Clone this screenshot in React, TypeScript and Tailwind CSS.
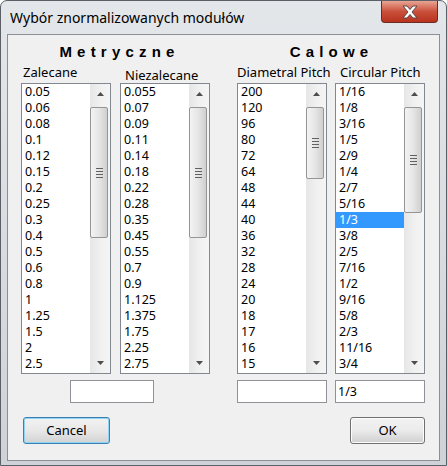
import React from 'react';

const zalecane = ['0.05', '0.06', '0.08', '0.1', '0.12', '0.15', '0.2', '0.25', '0.3', '0.4', '0.5', '0.6', '0.8', '1', '1.25', '1.5', '2', '2.5'];
const niezalecane = ['0.055', '0.07', '0.09', '0.11', '0.14', '0.18', '0.22', '0.28', '0.35', '0.45', '0.55', '0.7', '0.9', '1.125', '1.375', '1.75', '2.25', '2.75'];
const diametral = ['200', '120', '96', '80', '72', '64', '48', '44', '40', '36', '32', '28', '24', '20', '18', '17', '16', '15'];
const circular = ['1/16', '1/8', '3/16', '1/5', '2/9', '1/4', '2/7', '5/16', '1/3', '3/8', '2/5', '7/16', '1/2', '9/16', '5/8', '2/3', '11/16', '3/4'];

const ArrowUp = () => (
  <svg width="7" height="4" viewBox="0 0 7 4">
    <path d="M3.5 0 L7 4 L0 4 Z" fill="#4d4d4d" />
  </svg>
);

const ArrowDown = () => (
  <svg width="7" height="4" viewBox="0 0 7 4">
    <path d="M0 0 L7 0 L3.5 4 Z" fill="#4d4d4d" />
  </svg>
);

const ScrollBar = ({ thumbClass }: { thumbClass: string }) => (
  <div className="flex w-[20px] flex-col bg-gradient-to-r from-[#e6e6e6] via-[#f0f0f0] to-[#f5f5f5]">
    <div className="flex h-[20px] items-center justify-center">
      <ArrowUp />
    </div>
    <div
      className={`mt-[3px] mr-[2px] flex flex-col items-center justify-center gap-[2px] rounded-[2px] border border-[#959595] bg-gradient-to-r from-[#f3f3f3] via-[#e6e6e6] to-[#cfcfcf] ${thumbClass}`}
    >
      <div className="h-px w-[7px] bg-[#616161]" />
      <div className="h-px w-[7px] bg-[#616161]" />
      <div className="h-px w-[7px] bg-[#616161]" />
      <div className="h-px w-[7px] bg-[#616161]" />
    </div>
    <div className="flex-1" />
    <div className="flex h-[20px] items-center justify-center">
      <ArrowDown />
    </div>
  </div>
);

const ListBox = ({ items, thumbClass, selected }: { items: string[]; thumbClass: string; selected?: string }) => (
  <div className="flex h-[291px] w-[90px] border border-[#828790] bg-white">
    <div className="flex-1 overflow-hidden">
      {items.map((item) => (
        <div
          key={item}
          className={`h-[16px] pl-[3px] text-[12.5px] leading-[16px] ${item === selected ? 'bg-[#3399ff] text-white' : 'text-black'}`}
        >
          {item}
        </div>
      ))}
    </div>
    <ScrollBar thumbClass={thumbClass} />
  </div>
);

const TextBox = ({ value, className }: { value: string; className: string }) => (
  <div className={`h-[23px] border border-[#8f9296] bg-white pl-[2px] text-[12.5px] leading-[21px] text-black ${className}`}>
    {value}
  </div>
);

const Heading = ({ children, className }: { children: string; className: string }) => (
  <div className={`flex h-[20px] items-center justify-center font-['Liberation_Sans',Arial,sans-serif] text-[15px] font-bold tracking-[5.2px] text-black ${className}`}>
    {children}
  </div>
);

const App: React.FC = () => {
  return (
    <div className="flex h-[466px] w-[447px] flex-col overflow-hidden rounded-t-[7px] border border-[#5c6066] bg-gradient-to-b from-[#e4e7ea] via-[#d9dde1] to-[#cfd3d8] font-['Noto_Sans','Open_Sans',sans-serif]">
      {/* title bar */}
      <div className="flex h-[33px] shrink-0 items-start justify-between">
        <div className="pl-[9px] pt-[7px] text-[14px] leading-[20px] text-black">Wybór znormalizowanych modułów</div>
        <div className="mr-[8px] flex h-[22px] w-[57px] items-center justify-center rounded-b-[4px] border border-t-0 border-[#6b2b24] bg-gradient-to-b from-[#e8a493] via-[#c94f3a] to-[#b8321c]">
          <svg width="18" height="14" viewBox="0 0 18 14">
            <path d="M2 1 L6 1 L9 4.5 L12 1 L16 1 L11 7 L16 13 L12 13 L9 9.5 L6 13 L2 13 L7 7 Z" fill="#ffffff" stroke="#5a4a48" strokeWidth="1" />
          </svg>
        </div>
      </div>

      {/* client area */}
      <div className="mx-[6px] mb-[4px] flex flex-1 flex-col border border-[#8a8f95] bg-[#f0f0f0] pl-[13px] pt-[7px] text-[13px]">
        <div className="flex">
          {/* Metryczne */}
          <div className="flex w-[189px] flex-col">
            <Heading className="pl-[8px]">Metryczne</Heading>
            <div className="mt-[3px] flex h-[18px]">
              <div className="w-[99px] pl-[2px] leading-[14px]">Zalecane</div>
              <div className="pl-[5px] pt-[3px] leading-[14px]">Niezalecane</div>
            </div>
            <div className="flex gap-[9px]">
              <ListBox items={zalecane} thumbClass="h-[131px]" />
              <ListBox items={niezalecane} thumbClass="h-[131px]" />
            </div>
            <TextBox value="" className="ml-[49px] mt-[6px] w-[84px]" />
          </div>

          {/* Calowe */}
          <div className="ml-[27px] flex w-[188px] flex-col">
            <Heading className="pl-[1px]">Calowe</Heading>
            <div className="mt-[3px] flex h-[18px]">
              <div className="w-[98px] leading-[14px]">Diametral Pitch</div>
              <div className="pl-[5px] leading-[14px]">Circular Pitch</div>
            </div>
            <div className="flex gap-[8px]">
              <ListBox items={diametral} thumbClass="h-[72px]" />
              <ListBox items={circular} thumbClass="h-[106px]" selected="1/3" />
            </div>
            <div className="mt-[6px] flex gap-[8px]">
              <TextBox value="" className="w-[90px]" />
              <TextBox value="1/3" className="w-[90px]" />
            </div>
          </div>
        </div>

        {/* buttons */}
        <div className="mt-[14px] flex w-[404px] justify-between">
          <button className="ml-[2px] h-[27px] w-[87px] rounded-[3px] border border-[#3c7fb1] bg-gradient-to-b from-[#f2f2f2] via-[#e8e8e8] to-[#d2d2d2] text-[13px] text-black shadow-[inset_0_0_0_1px_#8fd3f5]">
            Cancel
          </button>
          <button className="h-[27px] w-[75px] rounded-[3px] border border-[#707070] bg-gradient-to-b from-[#f2f2f2] via-[#ebebeb] to-[#cfcfcf] text-[13px] text-black shadow-[inset_0_0_0_1px_#fcfcfc]">
            OK
          </button>
        </div>
      </div>
    </div>
  );
};

export default App;
